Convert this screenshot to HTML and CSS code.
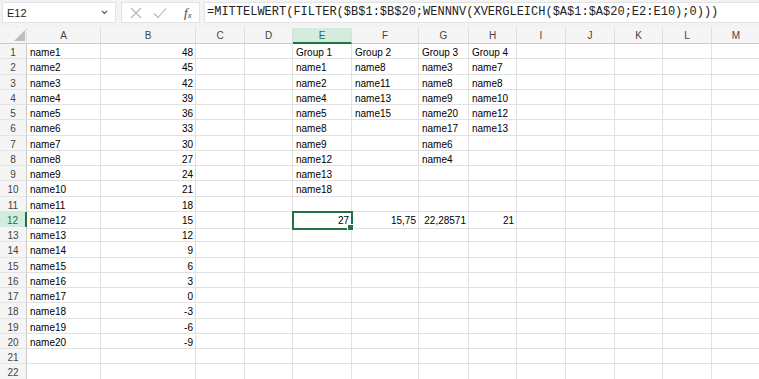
FILE: index.html
```html
<!DOCTYPE html>
<html lang="de">
  <head>
    <meta charset="UTF-8" />
    <title>Mappe1 - Excel</title>
    <link rel="stylesheet" href="styles.css">
  </head>
  <body>
    <!-- Formula bar -->
    <div class="toolbar">
      <div class="namebox">
        <span>E12</span>
        <svg class="chev" width="7" height="5" viewBox="0 0 7 5"><path d="M1 1 L3.5 3.5 L6 1" fill="none" stroke="#555" stroke-width="1.1"/></svg>
      </div>
      <div class="fxbtns">
        <svg width="12" height="12" viewBox="0 0 12 12"><path d="M1 1 L11 11 M11 1 L1 11" stroke="#b4b4b4" stroke-width="1.1" fill="none"/></svg>
        <svg width="14" height="12" viewBox="0 0 14 12"><path d="M1 6.5 L5 10.5 L13 1.5" stroke="#b4b4b4" stroke-width="1.1" fill="none"/></svg>
        <span class="fx">f<sub>x</sub></span>
      </div>
      <div class="formula">=MITTELWERT(FILTER($B$1:$B$20;WENNNV(XVERGLEICH($A$1:$A$20;E2:E10);0)))</div>
    </div>

    <!-- Sheet -->
    <div class="sheet">
      <div class="row head">
        <span class="corner"><svg width="11" height="11" viewBox="0 0 11 11"><path d="M11 0 L11 11 L0 11 Z" fill="#bdbdbd"/></svg></span>
        <span>A</span><span>B</span><span>C</span><span>D</span><span class="active">E</span><span>F</span><span>G</span><span>H</span><span>I</span><span>J</span><span>K</span><span>L</span><span>M</span>
      </div>
      <div class="row"><span class="rh">1</span><span>name1</span><span class="num">48</span><span></span><span></span><span>Group 1</span><span>Group 2</span><span>Group 3</span><span>Group 4</span><span></span><span></span><span></span><span></span><span></span></div>
      <div class="row"><span class="rh">2</span><span>name2</span><span class="num">45</span><span></span><span></span><span>name1</span><span>name8</span><span>name3</span><span>name7</span><span></span><span></span><span></span><span></span><span></span></div>
      <div class="row"><span class="rh">3</span><span>name3</span><span class="num">42</span><span></span><span></span><span>name2</span><span>name11</span><span>name8</span><span>name8</span><span></span><span></span><span></span><span></span><span></span></div>
      <div class="row"><span class="rh">4</span><span>name4</span><span class="num">39</span><span></span><span></span><span>name4</span><span>name13</span><span>name9</span><span>name10</span><span></span><span></span><span></span><span></span><span></span></div>
      <div class="row"><span class="rh">5</span><span>name5</span><span class="num">36</span><span></span><span></span><span>name5</span><span>name15</span><span>name20</span><span>name12</span><span></span><span></span><span></span><span></span><span></span></div>
      <div class="row"><span class="rh">6</span><span>name6</span><span class="num">33</span><span></span><span></span><span>name8</span><span></span><span>name17</span><span>name13</span><span></span><span></span><span></span><span></span><span></span></div>
      <div class="row"><span class="rh">7</span><span>name7</span><span class="num">30</span><span></span><span></span><span>name9</span><span></span><span>name6</span><span></span><span></span><span></span><span></span><span></span><span></span></div>
      <div class="row"><span class="rh">8</span><span>name8</span><span class="num">27</span><span></span><span></span><span>name12</span><span></span><span>name4</span><span></span><span></span><span></span><span></span><span></span><span></span></div>
      <div class="row"><span class="rh">9</span><span>name9</span><span class="num">24</span><span></span><span></span><span>name13</span><span></span><span></span><span></span><span></span><span></span><span></span><span></span><span></span></div>
      <div class="row"><span class="rh">10</span><span>name10</span><span class="num">21</span><span></span><span></span><span>name18</span><span></span><span></span><span></span><span></span><span></span><span></span><span></span><span></span></div>
      <div class="row"><span class="rh">11</span><span>name11</span><span class="num">18</span><span></span><span></span><span></span><span></span><span></span><span></span><span></span><span></span><span></span><span></span><span></span></div>
      <div class="row"><span class="rh active">12</span><span>name12</span><span class="num">15</span><span></span><span></span><span class="num sel">27</span><span class="num">15,75</span><span class="num">22,28571</span><span class="num">21</span><span></span><span></span><span></span><span></span><span></span></div>
      <div class="row"><span class="rh">13</span><span>name13</span><span class="num">12</span><span></span><span></span><span></span><span></span><span></span><span></span><span></span><span></span><span></span><span></span><span></span></div>
      <div class="row"><span class="rh">14</span><span>name14</span><span class="num">9</span><span></span><span></span><span></span><span></span><span></span><span></span><span></span><span></span><span></span><span></span><span></span></div>
      <div class="row"><span class="rh">15</span><span>name15</span><span class="num">6</span><span></span><span></span><span></span><span></span><span></span><span></span><span></span><span></span><span></span><span></span><span></span></div>
      <div class="row"><span class="rh">16</span><span>name16</span><span class="num">3</span><span></span><span></span><span></span><span></span><span></span><span></span><span></span><span></span><span></span><span></span><span></span></div>
      <div class="row"><span class="rh">17</span><span>name17</span><span class="num">0</span><span></span><span></span><span></span><span></span><span></span><span></span><span></span><span></span><span></span><span></span><span></span></div>
      <div class="row"><span class="rh">18</span><span>name18</span><span class="num">-3</span><span></span><span></span><span></span><span></span><span></span><span></span><span></span><span></span><span></span><span></span><span></span></div>
      <div class="row"><span class="rh">19</span><span>name19</span><span class="num">-6</span><span></span><span></span><span></span><span></span><span></span><span></span><span></span><span></span><span></span><span></span><span></span></div>
      <div class="row"><span class="rh">20</span><span>name20</span><span class="num">-9</span><span></span><span></span><span></span><span></span><span></span><span></span><span></span><span></span><span></span><span></span><span></span></div>
      <div class="row"><span class="rh">21</span><span></span><span></span><span></span><span></span><span></span><span></span><span></span><span></span><span></span><span></span><span></span><span></span><span></span></div>
      <div class="row"><span class="rh">22</span><span></span><span></span><span></span><span></span><span></span><span></span><span></span><span></span><span></span><span></span><span></span><span></span><span></span></div>
    </div>
  </body>
</html>
```

FILE: styles.css
```css
* {
  margin: 0;
  padding: 0;
  box-sizing: border-box;
}

body {
  background: #fff;
  font-family: 'Liberation Sans', Arial, sans-serif;
  font-size: 10px;
  color: #000;
  overflow: hidden;
}

/* Formula bar */
.toolbar {
  display: flex;
  gap: 5px;
  height: 28px;
  padding: 2px 0 5px 2px;
  background: #f3f3f3;
}

.namebox {
  display: flex;
  align-items: center;
  justify-content: space-between;
  width: 114px;
  padding: 0 7px 0 4px;
  background: #fff;
  border: 1px solid #e3e3e3;
  font-size: 11px;
  color: #222;
}

.fxbtns {
  display: flex;
  align-items: center;
  gap: 11px;
  width: 79px;
  padding-left: 8px;
  background: #fff;
  border: 1px solid #e3e3e3;
}

.fx {
  font-family: 'Liberation Serif', 'Times New Roman', serif;
  font-style: italic;
  font-size: 13px;
  color: #444;
  margin-left: 6px;
}

.fx sub {
  font-size: 9px;
  vertical-align: -1px;
}

.formula {
  flex: 1;
  margin-left: -1px;
  padding: 2px 0 0 2px;
  background: #fff;
  border: 1px solid #e3e3e3;
  border-right: none;
  font-family: 'Liberation Mono', 'Courier New', monospace;
  font-size: 12px;
  color: #222;
  white-space: nowrap;
}

/* Sheet */
.sheet {
  --cols: 27px 74px 95px 49px 48px 59px 67px 50px 48px 49px 49px 48px 49px 49px;
}

.row {
  display: grid;
  grid-template-columns: var(--cols);
  height: 15.25px;
}

.row span {
  border-right: 1px solid #e1e1e1;
  border-bottom: 1px solid #e1e1e1;
  padding: 2px 3px 0;
  line-height: 14px;
  white-space: nowrap;
  overflow: hidden;
}

.row .num {
  text-align: right;
  padding-right: 2px;
}

.head {
  height: 16px;
  background: #f5f5f5;
}

.head span {
  padding-top: 1px;
  text-align: center;
  color: #444;
  border-right: 1px solid #dedede;
  border-bottom: 1px solid #c9c9c9;
}

.head .corner {
  display: flex;
  justify-content: flex-end;
  align-items: flex-end;
  padding: 0 1px 2px 0;
}

.head .active {
  background: #d3ecdd;
  color: #217346;
  border-bottom: 2px solid #217346;
}

.row .rh {
  text-align: center;
  padding: 2px 0 0;
  background: #f5f5f5;
  color: #444;
  border-right: 1px solid #c9c9c9;
  border-bottom: 1px solid #e4e4e4;
}

.row .rh.active {
  background: #d3ecdd;
  color: #217346;
  border-right: 2px solid #217346;
}

.row .sel {
  position: relative;
  overflow: visible;
  outline: 2px solid #217346;
  outline-offset: -1px;
}

.row .sel::after {
  content: '';
  position: absolute;
  right: -3px;
  bottom: -3px;
  width: 5px;
  height: 5px;
  background: #217346;
  border: 1px solid #fff;
}
```
